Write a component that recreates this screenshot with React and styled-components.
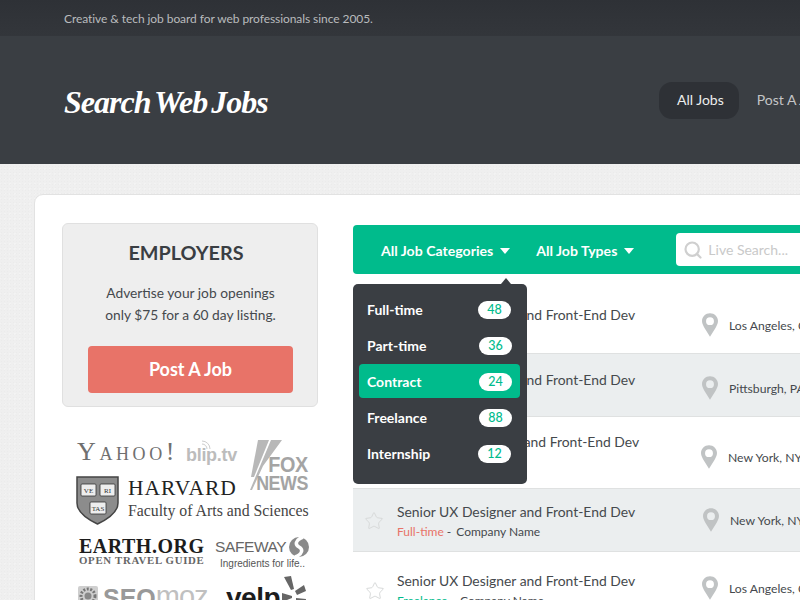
import styled, { createGlobalStyle } from "styled-components";
import { Search, Star } from "lucide-react";

const GlobalStyle = createGlobalStyle`
  html, body {
    margin: 0;
    padding: 0;
    width: 800px;
    height: 600px;
    overflow: hidden;
  }
  body {
    font-family: "Lato", "Liberation Sans", sans-serif;
    color: #3a3e43;
  }
`;

const Page = styled.div`
  width: 800px;
  height: 600px;
  overflow: hidden;
  background-color: #efefef;
  background-image: radial-gradient(#ebebeb 1px, transparent 1px),
    radial-gradient(#f3f3f3 1px, transparent 1px);
  background-size: 3px 3px, 5px 5px;
  background-position: 0 0, 2px 1px;
`;

const TopBar = styled.div`
  height: 36px;
  background: linear-gradient(#2e3136, #33363b);
  padding-left: 64px;
  display: flex;
  align-items: center;
  font-size: 12px;
  letter-spacing: -0.07px;
  color: #b9bbbd;
`;

const Header = styled.header`
  height: 128px;
  background: #3a3e43;
  display: flex;
  align-items: center;
  padding-left: 64px;
  width: 1000px;
`;

const Logo = styled.h1`
  width: 595px;
  flex: none;
  margin: 0;
  padding-top: 4px;
  font-family: "Liberation Serif", serif;
  font-style: italic;
  font-weight: 700;
  font-size: 32px;
  letter-spacing: -1px;
  word-spacing: -3px;
  color: #fff;
  white-space: nowrap;
`;

const Nav = styled.nav`
  display: flex;
  align-items: center;
  gap: 18px;
  margin-top: 1px;
`;

const NavLink = styled.a`
  font-size: 14px;
  padding: ${(p) => (p.$active ? "0 15px 0 18px" : "0")};
  height: 37px;
  line-height: 35px;
  border-radius: 13px;
  white-space: nowrap;
  background: ${(p) => (p.$active ? "#2e3136" : "transparent")};
  color: ${(p) => (p.$active ? "#eceded" : "#c4c5c7")};
`;

const Card = styled.main`
  margin: 30px 0 0 34px;
  width: 900px;
  height: 600px;
  box-sizing: border-box;
  background: #fff;
  border: 1px solid #e2e2e2;
  border-radius: 9px;
  padding: 28px 0 0 27px;
  display: flex;
  gap: 35px;
`;

const Sidebar = styled.aside`
  width: 256px;
  flex: none;
`;

const Employers = styled.section`
  box-sizing: border-box;
  height: 184px;
  background: #eeeeee;
  border: 1px solid #e0e0e0;
  border-radius: 6px;
  padding: 16px 24px 0 25px;
  text-align: center;
`;

const EmployersTitle = styled.h2`
  margin: 0;
  padding-right: 9px;
  font-size: 19.8px;
  line-height: 24px;
  font-weight: 700;
  color: #3a3e43;
`;

const EmployersText = styled.p`
  margin: 18px 0 20px;
  font-size: 13.75px;
  line-height: 22px;
  color: #45494d;
`;

const PostButton = styled.a`
  display: block;
  height: 47px;
  line-height: 46px;
  border-radius: 4px;
  background: #e87368;
  color: #fff;
  font-size: 18px;
  font-weight: 700;
`;

const Logos = styled.div`
  margin: 33px 0 0 15px;
  width: 234px;
`;

const LogoRow = styled.div`
  display: flex;
  align-items: ${(p) => p.$align || "center"};
  margin-top: ${(p) => p.$top || 0}px;
`;

const Yahoo = styled.span`
  font-family: "Liberation Serif", serif;
  font-size: 26px;
  line-height: 24px;
  font-variant: small-caps;
  letter-spacing: 3.6px;
  color: #707070;
  width: 109px;
  flex: none;
  white-space: nowrap;
`;

const Blip = styled.span`
  position: relative;
  font-family: "Liberation Sans", sans-serif;
  font-size: 18px;
  font-weight: 700;
  line-height: 24px;
  color: #bcbcbc;
  letter-spacing: -0.3px;
  width: 64px;
  flex: none;
  margin-top: 3px;

  svg {
    position: absolute;
    left: 15px;
    top: -3px;
  }
`;

const Fox = styled.div`
  position: relative;
  width: 60px;
  height: 50px;
  flex: none;
  margin: 0 0 -26px 0;
`;

const FoxText = styled.span`
  position: absolute;
  right: 2px;
  top: ${(p) => p.$top}px;
  font-family: "Liberation Sans", sans-serif;
  font-weight: 700;
  font-size: ${(p) => p.$size}px;
  line-height: 1;
  color: #a4a4a4;
  transform: scaleX(${(p) => p.$scale});
  transform-origin: right center;
  letter-spacing: -0.5px;
`;

const HarvardText = styled.div`
  margin-left: 9px;
  font-family: "Liberation Serif", serif;
  color: #333;
  white-space: nowrap;
`;

const HarvardName = styled.div`
  font-size: 21.5px;
  line-height: 25px;
  letter-spacing: 1px;
  color: #222;
`;

const HarvardSub = styled.div`
  font-size: 15.8px;
  line-height: 19px;
  color: #444;
`;

const EarthBlock = styled.div`
  width: 136px;
  flex: none;
  margin-left: 2px;
  font-family: "Liberation Serif", serif;
  font-weight: 700;
`;

const EarthName = styled.div`
  font-size: 20px;
  line-height: 18px;
  color: #1c1c1c;
  white-space: nowrap;
  letter-spacing: 0.5px;
`;

const EarthSub = styled.div`
  font-size: 10.8px;
  line-height: 11px;
  letter-spacing: 0.7px;
  color: #666;
  white-space: nowrap;
`;

const SafewayBlock = styled.div`
  font-family: "Liberation Sans", sans-serif;
  color: #555;
`;

const SafewayName = styled.div`
  display: flex;
  align-items: center;
  gap: 3px;
  font-size: 15.5px;
  line-height: 18px;
  letter-spacing: -0.4px;
  color: #666;
`;

const SafewaySub = styled.div`
  margin-left: 5px;
  font-size: 10px;
  line-height: 13px;
  white-space: nowrap;
`;

const Seo = styled.span`
  display: flex;
  align-items: flex-start;
  font-family: "Liberation Sans", sans-serif;
  font-size: 25px;
  line-height: 28px;
  color: #999;
  width: 149px;
  height: 28px;
  flex: none;
  white-space: nowrap;

  svg {
    margin: 2px 5px 0 1px;
  }
  b {
    font-weight: 700;
  }
  span {
    font-size: 29px;
    letter-spacing: -1px;
    line-height: 24px;
    font-weight: 400;
    color: #c0c0c0;
  }
`;

const Yelp = styled.span`
  display: flex;
  align-items: flex-end;
  font-family: "Liberation Sans", sans-serif;
  font-weight: 700;
  font-size: 28px;
  line-height: 28px;
  color: #1d1d1d;
  letter-spacing: -0.5px;
`;

const Content = styled.div`
  position: relative;
  width: 520px;
  flex: none;
  padding-top: 2px;
`;

const FilterBar = styled.div`
  height: 49px;
  background: #00bb8c;
  border-radius: 4px 0 0 4px;
  display: flex;
  align-items: center;
  padding-left: 28px;
`;

const Filter = styled.span`
  display: flex;
  align-items: center;
  gap: 7px;
  margin-right: ${(p) => p.$gap}px;
  padding-top: 1px;
  font-size: 14.1px;
  font-weight: 700;
  color: #fff;
  white-space: nowrap;

  &::after {
    content: "";
    border-left: 5px solid transparent;
    border-right: 5px solid transparent;
    border-top: 6px solid #fff;
    margin-top: 2px;
  }
`;

const SearchBox = styled.div`
  width: 200px;
  height: 33px;
  box-sizing: border-box;
  background: #fff;
  border-radius: 4px;
  display: flex;
  align-items: center;
  gap: 5px;
  padding-left: 7px;
  font-size: 14px;
  color: #c9c9c9;
`;

const Jobs = styled.div``;

const JobRow = styled.div`
  box-sizing: border-box;
  height: ${(p) => p.$height}px;
  padding-top: ${(p) => p.$top}px;
  background: ${(p) => (p.$shade ? "#ebeeef" : "#fff")};
  border-bottom: 1px solid #dfe1e1;
  display: flex;
  align-items: flex-start;
`;

const StarCell = styled.div`
  width: 44px;
  flex: none;
  padding-left: ${(p) => 11 + p.$nudge}px;
  box-sizing: border-box;
  margin-top: ${(p) => 9 + p.$nudge}px;
  color: #d8dada;
  display: flex;
`;

const JobMain = styled.div`
  width: 305px;
  flex: none;
  box-sizing: border-box;
  padding-left: ${(p) => p.$shift}px;
`;

const JobTitle = styled.div`
  font-size: 13.9px;
  line-height: 20px;
  color: #45494d;
  white-space: nowrap;
`;

const JobMeta = styled.div`
  font-size: 12px;
  line-height: 18px;
  margin-top: 1px;
  color: #45494d;
  white-space: nowrap;
`;

const JobType = styled.span`
  color: ${(p) => p.$color};
  margin-right: 3px;
`;

const Company = styled.span`
  margin-left: 2px;
`;

const Place = styled.div`
  display: flex;
  align-items: center;
  gap: 11px;
  margin-top: ${(p) => p.$top}px;
  margin-left: ${(p) => p.$shift}px;
  font-size: 12.2px;
  color: #45494d;
  white-space: nowrap;
`;

const Dropdown = styled.div`
  position: absolute;
  left: 0;
  top: 61px;
  width: 174px;
  height: 200px;
  box-sizing: border-box;
  background: #3a3e43;
  border-radius: 5px;
  padding: 8px 7px 0 6px;
  display: flex;
  flex-direction: column;
  gap: 2px;

  &::before {
    content: "";
    position: absolute;
    top: -6px;
    left: 148px;
    border-left: 5px solid transparent;
    border-right: 5px solid transparent;
    border-bottom: 6px solid #3a3e43;
  }
`;

const MenuItem = styled.div`
  height: 34px;
  border-radius: 4px;
  padding: 1px 8px 0;
  box-sizing: border-box;
  display: flex;
  align-items: center;
  justify-content: space-between;
  font-size: 14px;
  font-weight: 700;
  color: #fff;
  background: ${(p) => (p.$active ? "#00bb8c" : "transparent")};
`;

const Badge = styled.span`
  width: 33px;
  height: 18px;
  margin-right: ${(p) => p.$right}px;
  border-radius: 9px;
  background: #fff;
  color: #00bb8c;
  font-size: 12.5px;
  font-weight: 500;
  line-height: 18px;
  text-align: center;
`;

const PinIcon = () => (
  <svg width="16" height="24" viewBox="0 0 17 25">
    <path
      fill="#c0c3c4"
      fillRule="evenodd"
      d="M8.500 0C3.800 0 0 3.700 0 8.300c0 2.900 1.600 5.400 3 8L8.500 25 14 16.300c1.400-2.600 3-5.100 3-8C17 3.700 13.200 0 8.500 0zm0 4.200a4.200 4.200 0 1 1 0 8.400 4.200 4.200 0 0 1 0-8.400z"
    />
  </svg>
);

const BlipWaves = () => (
  <svg width="10" height="10" viewBox="0 0 10 10" fill="none" stroke="#cdcdcd" strokeWidth="1">
    <path d="M1 4a5 5 0 0 1 5 5" />
    <path d="M1 1a8 8 0 0 1 8 8" />
  </svg>
);

const FoxStripes = () => (
  <svg width="34" height="50" viewBox="0 0 34 50">
    <g fill="#b8b8b8">
      <polygon points="8,0 19,0 4,37 1,37" />
      <polygon points="21,0 32,0 13,26 2,50 0,50" />
    </g>
  </svg>
);

const HarvardShield = () => (
  <svg width="43" height="49" viewBox="0 0 43 49" style={{ marginLeft: -1 }}>
    <path fill="#8c8c8c" stroke="#444" strokeWidth="1.500" d="M1 1h41v26c0 9-10 16-20.500 21C11 43 1 36 1 27z" />
    <g fill="#eee" stroke="#333" strokeWidth="0.800">
      <rect x="5" y="8" width="15" height="12" rx="1" />
      <rect x="24" y="8" width="15" height="12" rx="1" />
      <rect x="14" y="26" width="16" height="12" rx="1" />
    </g>
    <g fill="#333" fontSize="7" fontFamily="Liberation Serif, serif" textAnchor="middle">
      <text x="12.500" y="17">VE</text>
      <text x="31.500" y="17">RI</text>
      <text x="22" y="35">TAS</text>
    </g>
  </svg>
);

const SafewayMark = () => (
  <svg width="20" height="20" viewBox="0 0 20 20">
    <circle cx="10" cy="10" r="10" fill="#8a8a8a" />
    <path d="M14 0c-8 3-8 8-4 10s4 7-4 10" fill="none" stroke="#fff" strokeWidth="3.500" />
  </svg>
);

const SeoGear = () => (
  <svg width="20" height="20" viewBox="0 0 20 20">
    <rect width="20" height="20" rx="2" fill="#cfcfcf" />
    <circle cx="10" cy="10" r="7" fill="none" stroke="#777" strokeWidth="3" strokeDasharray="2 1.500" />
    <circle cx="10" cy="10" r="3.500" fill="#888" />
  </svg>
);

const YelpBurst = () => (
  <svg width="27" height="36" viewBox="0 0 27 36">
    <g fill="#666">
      <polygon points="4,1 11,0 14,13 11,14" />
      <polygon points="15,15 24,9 26,15 17,19" />
      <polygon points="16,22 26,23 25,30 16,25" />
      <polygon points="11,24 14,26 15,36 9,35" />
      <polygon points="2,17 12,20 12,22 2,26" />
    </g>
  </svg>
);

const menu = [
  { name: "Full-time", count: 48, right: 1 },
  { name: "Part-time", count: 36, right: 0 },
  { name: "Contract", count: 24, right: 0, active: true },
  { name: "Freelance", count: 88, right: 0 },
  { name: "Internship", count: 12, right: 1 },
];

const TITLE = "Senior UX Designer and Front-End Dev";

const jobs = [
  { height: 80, top: 31, city: "Los Angeles, CA", placeTop: 8, placeShift: 0, titleShift: 0, nudge: 0 },
  { height: 63, top: 16, shade: true, city: "Pittsburgh, PA", placeTop: 6, placeShift: 0, titleShift: 0, nudge: 0 },
  { height: 72, top: 15, city: "New York, NY", placeTop: 13, placeShift: -1, titleShift: 4, nudge: 0 },
  { height: 63, top: 13, shade: true, city: "New York, NY", placeTop: 6, placeShift: 1, titleShift: 0, nudge: 0, type: "Full-time", color: "#e87368" },
  { height: 63, top: 19, city: "Los Angeles, CA", placeTop: 5, placeShift: 0, titleShift: 0, nudge: 1, type: "Freelance", color: "#00bb8c" },
];

export default function App() {
  return (
    <>
      <GlobalStyle />
      <Page>
        <TopBar>Creative &amp; tech job board for web professionals since 2005.</TopBar>
        <Header>
          <Logo>Search Web Jobs</Logo>
          <Nav>
            <NavLink $active>All Jobs</NavLink>
            <NavLink>Post A Job</NavLink>
          </Nav>
        </Header>
        <Card>
          <Sidebar>
            <Employers>
              <EmployersTitle>EMPLOYERS</EmployersTitle>
              <EmployersText>
                Advertise your job openings
                <br />
                only $75 for a 60 day listing.
              </EmployersText>
              <PostButton>Post A Job</PostButton>
            </Employers>
            <Logos>
              <LogoRow $align="flex-start">
                <Yahoo>Yahoo!</Yahoo>
                <Blip>
                  <BlipWaves />
                  blip.tv
                </Blip>
                <Fox>
                  <FoxStripes />
                  <FoxText $top={14} $size={22} $scale={0.9}>FOX</FoxText>
                  <FoxText $top={32} $size={21} $scale={0.85}>NEWS</FoxText>
                </Fox>
              </LogoRow>
              <LogoRow $top={9} $align="flex-start">
                <HarvardShield />
                <HarvardText>
                  <HarvardName>HARVARD</HarvardName>
                  <HarvardSub>Faculty of Arts and Sciences</HarvardSub>
                </HarvardText>
              </LogoRow>
              <LogoRow $top={12} $align="flex-start">
                <EarthBlock>
                  <EarthName>EARTH.ORG</EarthName>
                  <EarthSub>OPEN TRAVEL GUIDE</EarthSub>
                </EarthBlock>
                <SafewayBlock>
                  <SafewayName>
                    SAFEWAY
                    <SafewayMark />
                  </SafewayName>
                  <SafewaySub>Ingredients for life..</SafewaySub>
                </SafewayBlock>
              </LogoRow>
              <LogoRow $top={6} $align="flex-end">
                <Seo>
                  <SeoGear />
                  <b>SEO</b>
                  <span>moz</span>
                </Seo>
                <Yelp>
                  yelp
                  <YelpBurst />
                </Yelp>
              </LogoRow>
            </Logos>
          </Sidebar>
          <Content>
            <FilterBar>
              <Filter $gap={26}>All Job Categories</Filter>
              <Filter $gap={42}>All Job Types</Filter>
              <SearchBox>
                <Search size={20} strokeWidth={2.6} color="#cfcfcf" />
                Live Search...
              </SearchBox>
            </FilterBar>
            <Jobs>
              {jobs.map((job, i) => (
                <JobRow key={i} $height={job.height} $top={job.top} $shade={job.shade}>
                  <StarCell $nudge={job.nudge}>
                    <Star size={20} strokeWidth={1.2} />
                  </StarCell>
                  <JobMain $shift={job.titleShift}>
                    <JobTitle>{TITLE}</JobTitle>
                    {job.type && (
                      <JobMeta>
                        <JobType $color={job.color}>{job.type}</JobType>- <Company>Company Name</Company>
                      </JobMeta>
                    )}
                  </JobMain>
                  <Place $top={job.placeTop} $shift={job.placeShift}>
                    <PinIcon />
                    {job.city}
                  </Place>
                </JobRow>
              ))}
            </Jobs>
            <Dropdown>
              {menu.map((item) => (
                <MenuItem key={item.name} $active={item.active}>
                  {item.name}
                  <Badge $right={item.right}>{item.count}</Badge>
                </MenuItem>
              ))}
            </Dropdown>
          </Content>
        </Card>
      </Page>
    </>
  );
}
